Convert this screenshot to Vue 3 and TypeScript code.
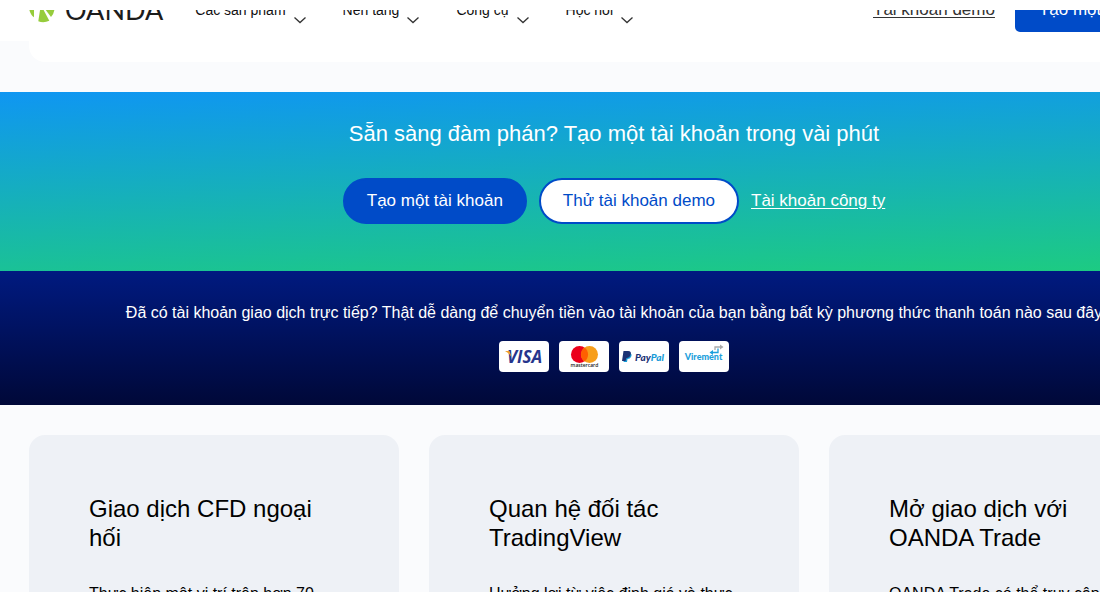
<script setup lang="ts">
interface Card {
  title: string
  body: string
}

const navItems: string[] = ['Các sản phẩm', 'Nền tảng', 'Công cụ', 'Học hỏi']

const cards: Card[] = [
  { title: 'Giao dịch CFD ngoại hối', body: 'Thực hiện một vị trí trên hơn 70' },
  { title: 'Quan hệ đối tác TradingView', body: 'Hưởng lợi từ việc định giá và thực' },
  { title: 'Mở giao dịch với OANDA Trade', body: 'OANDA Trade có thể truy cập' },
]
</script>

<template>
  <div class="page">
    <header class="header">
      <div class="bar">
        <a class="logo" href="#" aria-label="OANDA">
          <svg width="28" height="26" viewBox="0 0 28 26" aria-hidden="true">
            <path d="M0 10 L.4 13 Q1.500 18 5 20.300 L5 10Z" fill="#96cc3c" />
            <path d="M11.500 10 L9.300 24.300 Q15 26.300 20.300 23.700 L13 10Z" fill="#96cc3c" />
            <path d="M14.500 10 L22 20 Q25.500 16.500 25.700 10Z" fill="#96cc3c" />
          </svg>
          <span class="wordmark">OANDA</span>
        </a>
        <nav class="nav">
          <button v-for="item in navItems" :key="item" type="button" class="nav-item">
            {{ item }}
            <svg class="chevron" width="12" height="7" viewBox="0 0 12 7" aria-hidden="true">
              <path d="M.5 .5 L6 5.500 L11.500 .5" fill="none" stroke="#333" stroke-width="1.300" />
            </svg>
          </button>
        </nav>
        <a class="demo" href="#">Tài khoản demo</a>
        <a class="signup" href="#">Tạo một tài khoản</a>
      </div>
    </header>

    <main>
      <div class="panel"></div>

      <section class="banner">
        <h2>Sẵn sàng đàm phán? Tạo một tài khoản trong vài phút</h2>
        <div class="actions">
          <button type="button" class="pill primary">Tạo một tài khoản</button>
          <button type="button" class="pill outline">Thử tài khoản demo</button>
          <a class="company" href="#">Tài khoản công ty</a>
        </div>
      </section>

      <section class="payments">
        <p>Đã có tài khoản giao dịch trực tiếp? Thật dễ dàng để chuyển tiền vào tài khoản của bạn bằng bất kỳ phương thức thanh toán nào sau đây</p>
        <div class="badges">
          <svg class="badge" viewBox="0 0 50 31" role="img" aria-label="Visa">
            <text x="8" y="22" class="visa">VISA</text>
            <path d="M6 10 H10.500 L12.500 16 Q10 12 6 10Z" fill="#f2a12c" />
          </svg>
          <svg class="badge" viewBox="0 0 50 31" role="img" aria-label="Mastercard">
            <circle cx="20.500" cy="13.500" r="8.500" fill="#eb001b" />
            <circle cx="30.500" cy="13.500" r="8.500" fill="#f79e1b" />
            <path d="M25.500 6.600 A8.500 8.500 0 0 1 25.500 20.400 A8.500 8.500 0 0 1 25.500 6.600Z" fill="#ff5f00" />
            <text x="25.500" y="26" text-anchor="middle" class="mastercard">mastercard</text>
          </svg>
          <svg class="badge" viewBox="0 0 50 31" role="img" aria-label="PayPal">
            <path d="M6 12 H11 Q13.500 13 12 16 Q11 18 8.500 18 L8 21 H4.500Z" fill="#179bd7" />
            <path d="M4.500 10 H9 Q13 10 11.500 14 Q10.500 17 7.500 17 L6.500 20 H3Z" fill="#1b3275" />
            <text x="16" y="20" class="paypal"><tspan fill="#1b3275">Pay</tspan><tspan fill="#179bd7">Pal</tspan></text>
          </svg>
          <svg class="badge" viewBox="0 0 50 31" role="img" aria-label="Virement">
            <text x="24.500" y="19" text-anchor="middle" class="virement">Virement</text>
            <path d="M36 9 V6 H42" fill="none" stroke="#aaa" stroke-width="1.300" />
            <path d="M41 3.500 L44.500 6 L41 8.500Z" fill="#aaa" />
            <path d="M39 7.500 V11.500 H33" fill="none" stroke="#1b9fdc" stroke-width="1.300" />
            <path d="M34 9 L30.500 11.500 L34 14Z" fill="#1b9fdc" />
          </svg>
        </div>
      </section>

      <section class="cards">
        <article v-for="card in cards" :key="card.title" class="card">
          <h3>{{ card.title }}</h3>
          <p>{{ card.body }}</p>
        </article>
      </section>
    </main>
  </div>
</template>

<style>
html,
body {
  height: 100%;
  overflow: hidden;
}

body {
  margin: 0;
  background: #fafbfd;
}
</style>

<style scoped>
.page {
  min-width: 1228px;
  color: #000;
  font-family: "Liberation Sans", Arial, sans-serif;
  font-size: 16px;
}

h2,
h3,
p {
  margin: 0;
  font-weight: 400;
}

button {
  font-family: inherit;
  cursor: pointer;
}

.header {
  display: flex;
  align-items: flex-end;
  height: 31px;
  overflow: hidden;
  border-top: 10px solid #fff;
  background: #fff;
}

.bar {
  display: flex;
  flex: 1;
  align-items: center;
  height: 62px;
  padding: 0 29px;
}

.logo {
  display: flex;
  gap: 8px;
  align-items: center;
  margin-right: 32px;
  color: #1c1c1c;
  text-decoration: none;
}

.wordmark {
  font-family: Lato, sans-serif;
  font-size: 27px;
  line-height: 24px;
}

.nav {
  display: flex;
  flex: 1;
  gap: 37px;
}

.nav-item {
  display: flex;
  gap: 8px;
  align-items: center;
  padding: 0;
  border: 0;
  background: none;
  color: #111;
  font-size: 14px;
  line-height: 20px;
}

.chevron {
  margin-top: 20px;
}

.demo {
  margin-right: 20px;
  color: #333;
  font-size: 17px;
  text-underline-offset: 2px;
}

.signup {
  padding: 0 24px;
  border-radius: 5px;
  background: #004bc8;
  color: #fff;
  font-size: 17px;
  line-height: 44px;
  text-decoration: none;
}

.panel {
  height: 21px;
  margin: 0 29px 30px;
  border-radius: 0 0 16px 16px;
  background: #fff;
}

.banner {
  display: flex;
  flex-direction: column;
  gap: 30px;
  align-items: center;
  padding: 28px 29px 47px;
  background: linear-gradient(178deg, #0f96f2, #1dcc80);
  color: #fff;
}

h2 {
  font-size: 22px;
  line-height: 28px;
}

.actions {
  display: flex;
  gap: 12px;
  align-items: center;
}

.pill {
  height: 46px;
  padding: 0 22px;
  border: 2px solid #004bc8;
  border-radius: 23px;
  font-size: 17px;
}

.primary {
  background: #004bc8;
  color: #fff;
}

.outline {
  background: #fff;
  color: #004bc8;
}

.company {
  color: #fff;
  font-size: 17px;
  text-underline-offset: 2px;
}

.payments {
  padding: 30px 29px 33px;
  background: linear-gradient(#001a80, #000838);
  color: #fff;
  text-align: center;
}

.payments p {
  line-height: 24px;
}

.badges {
  display: flex;
  gap: 10px;
  justify-content: center;
  margin-top: 16px;
}

.badge {
  width: 50px;
  height: 31px;
  border-radius: 4px;
  background: #fff;
}

.visa {
  fill: #26358c;
  font: italic 700 17px "Open Sans", sans-serif;
}

.mastercard {
  fill: #222;
  font: 600 5px "Open Sans", sans-serif;
}

.paypal {
  font: italic 900 10px Lato, sans-serif;
}

.virement {
  fill: #1b9fdc;
  font: 900 9px Lato, sans-serif;
}

.cards {
  display: grid;
  grid-template-columns: repeat(3, 1fr);
  gap: 30px;
  padding: 30px 29px;
}

.card {
  padding: 59px 60px 80px;
  border-radius: 16px;
  background: #eef1f6;
}

h3 {
  margin-bottom: 30px;
  font-size: 24px;
  line-height: 29px;
}

.card p {
  line-height: 24px;
}
</style>
